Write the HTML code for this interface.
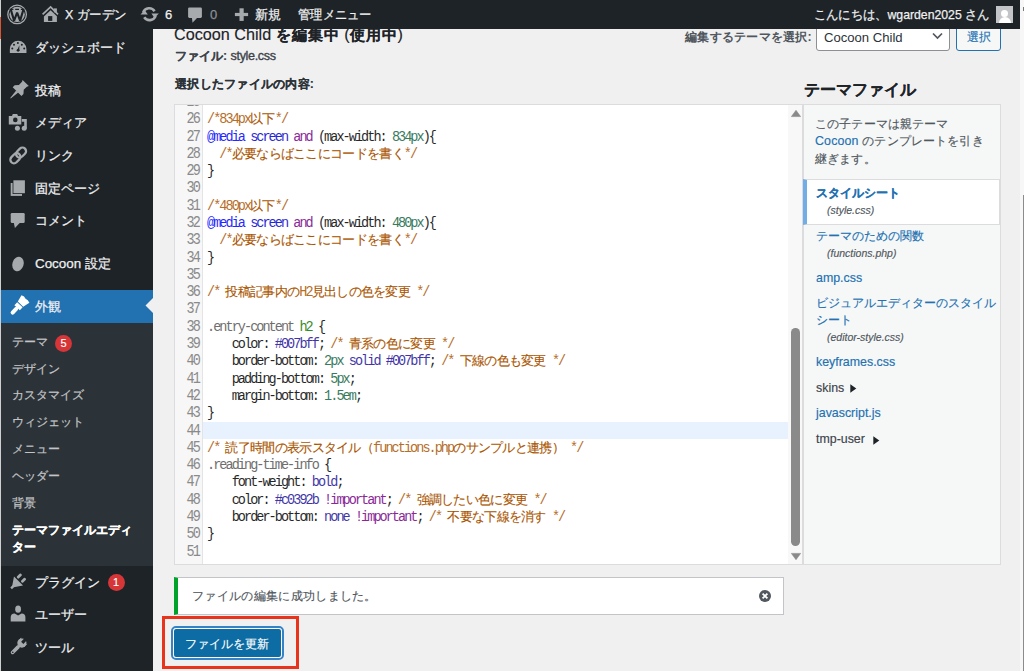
<!DOCTYPE html>
<html><head><meta charset="utf-8">
<style>
*{box-sizing:border-box}
html,body{margin:0;padding:0}
body{-webkit-text-stroke:0.15px currentColor;}
[style*="bold"]{-webkit-text-stroke:0.12px currentColor;}
body{width:1024px;height:671px;overflow:hidden;position:relative;background:#f0f0f1;font-family:"Liberation Sans",sans-serif;color:#3c434a}
.a{position:absolute;white-space:nowrap}
svg{position:absolute;overflow:visible}
#bar{position:absolute;left:0;top:0;width:1020px;height:29px;background:#1d2327;z-index:10}
#side{position:absolute;left:0;top:29px;width:153px;height:642px;background:#1d2327;z-index:1}
#edge{z-index:20;position:absolute;left:0;top:0;width:1px;height:671px;background:#cfcfcf}
#edge2{z-index:21;position:absolute;left:0;top:17px;width:1px;height:22px;background:#d9542f}
#rstrip{z-index:20;position:absolute;left:1020px;top:0;width:4px;height:671px;background:#f7f7f7}
.bt{-webkit-text-stroke:0.25px currentColor;color:#f0f0f1;font-size:13px;line-height:16px;top:7px;z-index:11}
.mi{z-index:2;-webkit-text-stroke:0.25px #f0f0f1;color:#f0f0f1;font-size:13.4px;line-height:18px;left:35px}
.sub{z-index:2;-webkit-text-stroke:0.2px currentColor;color:#c3c4c7;font-size:12.4px;line-height:16px;left:12px}
.badge{z-index:2;position:absolute;width:17px;height:17px;border-radius:50%;background:#d63638;color:#fff;font-size:11px;line-height:17px;text-align:center}
.h{color:#1d2327}
#ed{position:absolute;left:174px;top:104px;width:629px;height:461px;background:#fff;border:1px solid #dcdcde;overflow:hidden}
#gut{position:absolute;left:0;top:0;width:28px;height:100%;background:#f7f7f7;border-right:1px solid #e4e4e4}
.ln{-webkit-text-stroke:0;position:absolute;left:0;width:23.8px;text-align:right;color:#8a8a8a;font-family:"Liberation Mono",monospace;font-size:13.5px;letter-spacing:-1.94px;line-height:17.29px;transform:scaleY(1.22);transform-origin:0 12.25px}
.cl{position:absolute;left:32px;color:#000;font-family:"Liberation Mono",monospace;font-size:13.5px;letter-spacing:-1.94px;line-height:17.29px;white-space:pre}
.cl .s{-webkit-text-stroke:0;opacity:0.85;display:inline-block;transform:scaleY(1.1);transform-origin:0 12.25px}
.cl .j{font-size:13px;letter-spacing:-0.7px;-webkit-text-stroke:0.12px currentColor}
.cm{color:#a50}.df{color:#00f}.at{color:#00c}.kw{color:#708}.nu{color:#164}.qu{color:#555}.tg{color:#170}.am{color:#219}
#files{position:absolute;left:803px;top:104px;width:198px;height:461px;background:#f6f7f7;border:1px solid #dcdcde}
.fl{position:absolute;left:12px;color:#2271b1;font-size:12.4px;line-height:17px;white-space:nowrap}
.fi{position:absolute;left:23px;color:#50575e;font-size:10.5px;font-style:italic;white-space:nowrap;line-height:14px}
</style></head><body>
<div id="bar"></div>
<div id="side"><div style="position:absolute;left:0;top:261px;width:153px;height:33px;background:#2271b1"></div><div style="position:absolute;left:0;top:294px;width:153px;height:243px;background:#2c3338"></div></div>
<div class="a mi" style="top:38.7px">ダッシュボード</div>
<div class="a mi" style="top:82.0px">投稿</div>
<div class="a mi" style="top:114.1px">メディア</div>
<div class="a mi" style="top:147.2px">リンク</div>
<div class="a mi" style="top:179.9px">固定ページ</div>
<div class="a mi" style="top:211.6px">コメント</div>
<div class="a mi" style="top:255.1px">Cocoon 設定</div>
<div class="a mi" style="top:298.2px">外観</div>
<div class="a mi" style="top:574.1px">プラグイン</div>
<div class="a mi" style="top:606.3px">ユーザー</div>
<div class="a mi" style="top:638.7px">ツール</div>
<div class="a sub" style="top:334.0px">テーマ</div>
<div class="a sub" style="top:361.2px">デザイン</div>
<div class="a sub" style="top:387.3px">カスタマイズ</div>
<div class="a sub" style="top:414.0px">ウィジェット</div>
<div class="a sub" style="top:441.0px">メニュー</div>
<div class="a sub" style="top:468.0px">ヘッダー</div>
<div class="a sub" style="top:494.5px">背景</div>
<div class="a sub" style="top:522px;color:#fff;font-weight:bold">テーマファイルエディ</div>
<div class="a sub" style="top:539px;color:#fff;font-weight:bold">ター</div>
<div class="badge" style="left:55px;top:334.5px">5</div>
<div class="badge" style="left:107.5px;top:574px">1</div>
<svg style="left:145px;top:298px;z-index:2" width="8" height="16"><path d="M8 0 L0.5 7.5 L8 15 Z" fill="#f0f0f1"/></svg>
<svg style="left:3px;top:0px;z-index:11" width="28" height="28" viewBox="0 0 28 28"><circle cx="14.1" cy="14.4" r="9.3" fill="none" stroke="#a7aaad" stroke-width="1.25"/><circle cx="14.1" cy="14.4" r="7.7" fill="#a7aaad"/><path d="M7.8 9.6 L11.1 20.6 L14.1 12.6 L17.1 20.6 L20.4 9.6" fill="none" stroke="#1d2327" stroke-width="2.1" stroke-linejoin="bevel"/><path d="M6.6 9.4 H10.4 M12.2 9.4 H16 M17.9 9.4 H21.4" stroke="#1d2327" stroke-width="1.1"/></svg>
<svg style="left:36px;top:0px;z-index:11" width="28" height="28" viewBox="0 0 28 28"><path d="M6.6 14.4 L14.6 6.9 L22 14.4" fill="none" stroke="#a7aaad" stroke-width="1.7"/><rect x="17.9" y="8.4" width="3" height="4" fill="#a7aaad"/><path d="M7.9 16.6 L14.6 10.3 L20.9 16.3 V21.9 H7.9 Z" fill="#a7aaad"/><rect x="12.1" y="16.1" width="4.2" height="4.8" fill="#1d2327"/></svg>
<svg style="left:134px;top:0px;z-index:11" width="28" height="28" viewBox="0 0 28 28"><path d="M9.2 12.5 A6.4 6.4 0 0 1 20.6 11.2" fill="none" stroke="#a7aaad" stroke-width="2.6"/><path d="M21.6 15.8 A6.4 6.4 0 0 1 10.2 17.3" fill="none" stroke="#a7aaad" stroke-width="2.6"/><path d="M6.5 14.5 L10.6 10 L13.8 14.5 Z" fill="#a7aaad"/><path d="M24.8 13.4 L20.6 18 L17.4 13.4 Z" fill="#a7aaad"/></svg>
<svg style="left:180px;top:0px;z-index:11" width="28" height="28" viewBox="0 0 28 28"><rect x="8.1" y="7.5" width="13.8" height="10.4" rx="1.3" fill="#a7aaad"/><path d="M11.9 17.5 L12.5 22.7 L17.5 17.5 Z" fill="#a7aaad"/></svg>
<svg style="left:227px;top:0px;z-index:11" width="28" height="28" viewBox="0 0 28 28"><rect x="7.9" y="12.9" width="13.2" height="3.2" fill="#a7aaad"/><rect x="12.5" y="8.3" width="4.2" height="12.6" fill="#a7aaad"/></svg>
<div style="position:absolute;left:996px;top:6px;width:17px;height:17px;background:#c3c4c7;overflow:hidden;z-index:11"><div style="position:absolute;left:5.2px;top:3.5px;width:6.6px;height:7px;border-radius:50%;background:#fff"></div><div style="position:absolute;left:2.5px;top:10.5px;width:12px;height:9px;border-radius:6px 6px 0 0;background:#fff"></div></div>
<svg style="left:4px;top:36px;z-index:2" width="28" height="28" viewBox="0 0 28 28"><path d="M5.85 17.1 V13.1 A8.3 8.3 0 0 1 22.45 13.1 V17.1 Z" fill="#a7aaad"/><circle cx="8.3" cy="12.4" r="1" fill="#1d2327"/><circle cx="10" cy="8.8" r="1" fill="#1d2327"/><circle cx="13.9" cy="6.9" r="1" fill="#1d2327"/><circle cx="17.8" cy="8.8" r="1" fill="#1d2327"/><circle cx="20.2" cy="12.4" r="1" fill="#1d2327"/><path d="M13 14.6 L15.4 9.2 L15.3 14.8 Z" fill="#1d2327"/><circle cx="14.1" cy="14.3" r="1.4" fill="#1d2327"/></svg>
<svg style="left:4px;top:76px;z-index:2" width="28" height="28" viewBox="0 0 28 28"><g transform="translate(14.5 14.2) rotate(45)"><path d="M-4.4 -10.2 H4.4 L3.4 -8.4 V-4 L6.2 -0.8 V2 H-6.2 V-0.8 L-3.4 -4 V-8.4 Z" fill="#a7aaad"/><path d="M-1.5 1.8 H1.5 L0.3 11.4 H-0.3 Z" fill="#a7aaad"/></g></svg>
<svg style="left:4px;top:108px;z-index:2" width="28" height="28" viewBox="0 0 28 28"><path d="M4.8 8.1 H8 L8.8 6 H13.2 L14 8.1 H17.3 V16.5 H4.8 Z" fill="#a7aaad"/><circle cx="11.3" cy="11.9" r="2.3" fill="#1d2327"/><path d="M17.8 11 H22.8 V20.4 H20.2 V13.8 H17.8 Z" fill="#a7aaad"/><circle cx="13.4" cy="20.3" r="2.5" fill="#a7aaad"/><circle cx="20.2" cy="20.3" r="2.5" fill="#a7aaad"/></svg>
<svg style="left:4px;top:141px;z-index:2" width="28" height="28" viewBox="0 0 28 28"><g transform="translate(14.2 14.4) rotate(-45)" fill="none" stroke="#a7aaad" stroke-width="2.3"><rect x="-1.6" y="-3.6" width="11.2" height="7.2" rx="3.6"/><rect x="-9.6" y="-3.6" width="11.2" height="7.2" rx="3.6"/></g></svg>
<svg style="left:4px;top:174px;z-index:2" width="28" height="28" viewBox="0 0 28 28"><rect x="6.7" y="9" width="11.3" height="12.9" fill="#a7aaad"/><rect x="8.6" y="5.5" width="13.1" height="14.5" fill="#1d2327"/><rect x="9.4" y="6.3" width="11.5" height="12.9" fill="#a7aaad"/></svg>
<svg style="left:4px;top:206px;z-index:2" width="28" height="28" viewBox="0 0 28 28"><rect x="6.7" y="6.9" width="14" height="10.2" rx="1.4" fill="#a7aaad"/><path d="M9.8 16.8 L10.9 21.9 L15.9 16.8 Z" fill="#a7aaad"/></svg>
<svg style="left:4px;top:250px;z-index:2" width="28" height="28" viewBox="0 0 28 28"><ellipse cx="14" cy="14" rx="5.6" ry="7.3" transform="rotate(18 14 14)" fill="#a7aaad"/></svg>
<svg style="left:4px;top:292px;z-index:2" width="28" height="28" viewBox="0 0 28 28"><g transform="translate(14.2 14.6) rotate(43)"><path d="M-3.7 -3.4 L-5.4 -10.6 Q-2.5 -12 0 -10.8 Q2.6 -11.8 5.6 -10.4 L3.7 -3.4 Z" fill="#fff"/><rect x="-3.7" y="-2.5" width="7.4" height="4.1" fill="#fff"/><rect x="-2" y="1" width="4" height="9.2" rx="2" fill="#fff"/></g></svg>
<svg style="left:4px;top:568px;z-index:2" width="28" height="28" viewBox="0 0 28 28"><g transform="translate(14.3 13.25) rotate(45)"><path d="M-6.4 -0.3 H6.4 L1 7.6 H-1 Z" fill="#a7aaad"/><rect x="-1.2" y="6.6" width="2.4" height="3.6" fill="#a7aaad"/><rect x="-4.3" y="-7.2" width="2.7" height="5.6" rx="1" fill="#a7aaad"/><rect x="1.6" y="-7.2" width="2.7" height="5.6" rx="1" fill="#a7aaad"/></g></svg>
<svg style="left:4px;top:600px;z-index:2" width="28" height="28" viewBox="0 0 28 28"><ellipse cx="14.1" cy="9.2" rx="2.9" ry="3.6" fill="#a7aaad"/><path d="M6.7 21.6 V17.2 Q6.7 13.9 10.6 13.6 L14.1 15.4 L17.6 13.6 Q21.4 13.9 21.4 17.2 V21.6 Z" fill="#a7aaad"/></svg>
<svg style="left:4px;top:633px;z-index:2" width="28" height="28" viewBox="0 0 28 28"><g transform="translate(14 14) rotate(45)"><rect x="-1.8" y="-2" width="3.6" height="11.5" rx="1.8" fill="#a7aaad"/><path d="M-4.4 -9 A5 5 0 0 0 4.4 -9 V-6 A4.6 4.6 0 0 1 -4.4 -6 Z" fill="#a7aaad"/><circle cx="0" cy="-5.5" r="4.6" fill="#a7aaad"/><rect x="-1.6" y="-11" width="3.2" height="5" fill="#1d2327"/><circle cx="0" cy="7.4" r="0.8" fill="#1d2327"/></g></svg>
<svg style="left:932px;top:32px;z-index:3" width="11" height="8" viewBox="0 0 11 8"><path d="M1 1.5 L5.5 6 L10 1.5" fill="none" stroke="#50575e" stroke-width="1.7"/></svg>
<svg style="left:758.8px;top:589.8px;z-index:3" width="12" height="12" viewBox="0 0 12 12"><circle cx="6" cy="6" r="6" fill="#50575e"/><path d="M3.6 3.6 L8.4 8.4 M8.4 3.6 L3.6 8.4" stroke="#fff" stroke-width="1.8"/></svg>
<div class="a bt" style="left:65px;transform:scaleX(0.96);transform-origin:0 0">X ガーデン</div>
<div class="a bt" style="left:165px">6</div>
<div class="a bt" style="left:210px;color:#8c8f94">0</div>
<div class="a bt" style="left:255px">新規</div>
<div class="a bt" style="left:298px;transform:scaleX(0.945);transform-origin:0 0">管理メニュー</div>
<div class="a bt" style="left:814px;font-size:13px;transform:scaleX(0.942);transform-origin:0 0">こんにちは、wgarden2025 さん</div>
<div class="a h" style="left:174px;top:24px;font-size:16.2px;line-height:20px">Cocoon Child <span style="font-size:15px;font-weight:bold;letter-spacing:1px">を編集中</span> (<span style="font-size:15px;font-weight:bold;letter-spacing:1px">使用中</span>)</div>
<div class="a h" style="left:175px;top:48px;font-size:12.4px;line-height:16px;font-weight:bold;color:#3c434a">ファイル: <span style="font-weight:normal;-webkit-text-stroke:0.35px currentColor;font-size:12.6px;letter-spacing:-0.35px">style.css</span></div>
<div class="a h" style="left:175px;top:76px;font-size:12.4px;line-height:16px;font-weight:bold;color:#2c3338;letter-spacing:0.25px">選択したファイルの内容:</div>
<div class="a h" style="left:685px;top:29px;font-size:12.4px;line-height:16px;font-weight:bold;color:#50575e;-webkit-text-stroke:0;letter-spacing:0.25px">編集するテーマを選択:</div>
<div style="position:absolute;left:816px;top:22px;width:134px;height:29px;background:#fff;border:1px solid #8c8f94;border-radius:3px"></div>
<div class="a" style="left:824px;top:29.5px;font-size:13.1px;line-height:16px;color:#2c3338;-webkit-text-stroke:0">Cocoon Child</div>
<div style="position:absolute;left:956px;top:22px;width:45px;height:29px;background:#f6f7f7;border:1px solid #2271b1;border-radius:3px"></div>
<div class="a" style="left:967px;top:29px;font-size:12.4px;line-height:16px;color:#2271b1">選択</div>
<div class="a h" style="left:804px;top:78.5px;font-size:16.3px;line-height:20px;font-weight:bold">テーマファイル</div>
<div id="ed"><div id="gut"></div><div class="ln" style="top:-10.99px">25</div><div class="cl" style="top:-10.99px"></div><div class="ln" style="top:6.30px">26</div><div class="cl" style="top:6.30px"><span class="cm"><span class="s">/*834px</span><span class="j">以下</span><span class="s">*/</span></span></div><div class="ln" style="top:23.59px">27</div><div class="cl" style="top:23.59px"><span class="df"><span class="s">@media</span></span> <span class="at"><span class="s">screen</span></span> <span class="kw"><span class="s">and</span></span><span class="s"> (max-width: </span><span class="nu"><span class="s">834px</span></span><span class="s">){</span></div><div class="ln" style="top:40.88px">28</div><div class="cl" style="top:40.88px">  <span class="cm"><span class="s">/*</span><span class="j">必要ならばここにコードを書く</span><span class="s">*/</span></span></div><div class="ln" style="top:58.17px">29</div><div class="cl" style="top:58.17px"><span class="s">}</span></div><div class="ln" style="top:75.46px">30</div><div class="cl" style="top:75.46px"></div><div class="ln" style="top:92.75px">31</div><div class="cl" style="top:92.75px"><span class="cm"><span class="s">/*480px</span><span class="j">以下</span><span class="s">*/</span></span></div><div class="ln" style="top:110.04px">32</div><div class="cl" style="top:110.04px"><span class="df"><span class="s">@media</span></span> <span class="at"><span class="s">screen</span></span> <span class="kw"><span class="s">and</span></span><span class="s"> (max-width: </span><span class="nu"><span class="s">480px</span></span><span class="s">){</span></div><div class="ln" style="top:127.33px">33</div><div class="cl" style="top:127.33px">  <span class="cm"><span class="s">/*</span><span class="j">必要ならばここにコードを書く</span><span class="s">*/</span></span></div><div class="ln" style="top:144.62px">34</div><div class="cl" style="top:144.62px"><span class="s">}</span></div><div class="ln" style="top:161.91px">35</div><div class="cl" style="top:161.91px"></div><div class="ln" style="top:179.20px">36</div><div class="cl" style="top:179.20px"><span class="cm"><span class="s">/* </span><span class="j">投稿記事内の</span><span class="s">H2</span><span class="j">見出しの色を変更</span><span class="s"> */</span></span></div><div class="ln" style="top:196.49px">37</div><div class="cl" style="top:196.49px"></div><div class="ln" style="top:213.78px">38</div><div class="cl" style="top:213.78px"><span class="qu"><span class="s">.entry-content</span></span> <span class="tg"><span class="s">h2</span></span><span class="s"> {</span></div><div class="ln" style="top:231.07px">39</div><div class="cl" style="top:231.07px"><span class="s">    color: </span><span class="am"><span class="s">#007bff</span></span><span class="s">; </span><span class="cm"><span class="s">/* </span><span class="j">青系の色に変更</span><span class="s"> */</span></span></div><div class="ln" style="top:248.36px">40</div><div class="cl" style="top:248.36px"><span class="s">    border-bottom: </span><span class="nu"><span class="s">2px</span></span> <span class="am"><span class="s">solid</span></span> <span class="am"><span class="s">#007bff</span></span><span class="s">; </span><span class="cm"><span class="s">/* </span><span class="j">下線の色も変更</span><span class="s"> */</span></span></div><div class="ln" style="top:265.65px">41</div><div class="cl" style="top:265.65px"><span class="s">    padding-bottom: </span><span class="nu"><span class="s">5px</span></span><span class="s">;</span></div><div class="ln" style="top:282.94px">42</div><div class="cl" style="top:282.94px"><span class="s">    margin-bottom: </span><span class="nu"><span class="s">1.5em</span></span><span class="s">;</span></div><div class="ln" style="top:300.23px">43</div><div class="cl" style="top:300.23px"><span class="s">}</span></div><div style="position:absolute;left:28px;top:316.62px;width:585px;height:17.29px;background:#e8f2fe"></div><div class="ln" style="top:317.52px">44</div><div class="cl" style="top:317.52px"></div><div class="ln" style="top:334.81px">45</div><div class="cl" style="top:334.81px"><span class="cm"><span class="s">/* </span><span class="j">読了時間の表示スタイル（</span><span class="s">functions.php</span><span class="j">のサンプルと連携）</span><span class="s"> */</span></span></div><div class="ln" style="top:352.10px">46</div><div class="cl" style="top:352.10px"><span class="qu"><span class="s">.reading-time-info</span></span><span class="s"> {</span></div><div class="ln" style="top:369.39px">47</div><div class="cl" style="top:369.39px"><span class="s">    font-weight: </span><span class="am"><span class="s">bold</span></span><span class="s">;</span></div><div class="ln" style="top:386.68px">48</div><div class="cl" style="top:386.68px"><span class="s">    color: </span><span class="am"><span class="s">#c0392b</span></span> <span class="kw"><span class="s">!important</span></span><span class="s">; </span><span class="cm"><span class="s">/* </span><span class="j">強調したい色に変更</span><span class="s"> */</span></span></div><div class="ln" style="top:403.97px">49</div><div class="cl" style="top:403.97px"><span class="s">    border-bottom: </span><span class="am"><span class="s">none</span></span> <span class="kw"><span class="s">!important</span></span><span class="s">; </span><span class="cm"><span class="s">/* </span><span class="j">不要な下線を消す</span><span class="s"> */</span></span></div><div class="ln" style="top:421.26px">50</div><div class="cl" style="top:421.26px"><span class="s">}</span></div><div class="ln" style="top:438.55px">51</div><div class="cl" style="top:438.55px"></div><div style="position:absolute;left:613px;top:0;width:14px;height:100%;background:#f8f8f8"></div><svg style="left:616px;top:5px" width="10" height="7" viewBox="0 0 10 7"><path d="M5 0.3 L9.6 6.6 H0.4 Z" fill="#8a8a8a" stroke="#8a8a8a" stroke-width="0.6" stroke-linejoin="round"/></svg><div style="position:absolute;left:616px;top:223px;width:8.8px;height:218px;border-radius:4.4px;background:#8a8a8a"></div><svg style="left:616px;top:448px" width="10" height="7" viewBox="0 0 10 7"><path d="M5 6.7 L9.6 0.4 H0.4 Z" fill="#8a8a8a" stroke="#8a8a8a" stroke-width="0.6" stroke-linejoin="round"/></svg></div>
<div id="files"><div class="a" style="left:11px;top:11px;font-size:12.4px;line-height:17.3px;color:#50575e;white-space:normal;width:190px;letter-spacing:0.15px">この子テーマは親テーマ<br><span style="color:#2271b1">Cocoon</span> のテンプレートを引き<br>継ぎます。</div><div style="position:absolute;left:-1px;top:74px;width:197px;height:46px;background:#fff;border-top:1px solid #dcdcde;border-bottom:1px solid #dcdcde;border-right:1px solid #dcdcde;border-left:4px solid #72aee6"></div><div class="fl" style="top:80px;font-weight:bold">スタイルシート</div><div class="fi" style="top:98px">(style.css)</div><div class="fl" style="top:123px">テーマのための関数</div><div class="fi" style="top:141px">(functions.php)</div><div class="fl" style="top:165px">amp.css</div><div class="fl" style="top:190px">ビジュアルエディターのスタイル</div><div class="fl" style="top:207px">シート</div><div class="fi" style="top:225px">(editor-style.css)</div><div class="fl" style="top:249px">keyframes.css</div><div class="fl" style="top:275px;color:#3c434a">skins</div><svg style="left:45.5px;top:279px" width="7" height="9" viewBox="0 0 7 9"><path d="M0.3 0.3 L6.3 4.5 L0.3 8.7 Z" fill="#1d2327"/></svg><div class="fl" style="top:300px">javascript.js</div><div class="fl" style="top:326px;color:#3c434a">tmp-user</div><svg style="left:69px;top:330.5px" width="7" height="9" viewBox="0 0 7 9"><path d="M0.3 0.3 L6.3 4.5 L0.3 8.7 Z" fill="#1d2327"/></svg></div>
<div style="position:absolute;left:174px;top:577px;width:610px;height:38px;background:#fff;border:1px solid #c3c4c7;border-left:4px solid #00a32a"></div>
<div class="a" style="left:192px;top:588px;font-size:12.4px;line-height:16px;color:#50575e;letter-spacing:0.32px">ファイルの編集に成功しました。</div>
<div style="position:absolute;left:171px;top:626px;width:113px;height:34px;border-radius:5px;border:2px solid #3582c4;"><div style="position:absolute;left:0;top:0;right:0;bottom:0;border:1px solid #fff;border-radius:3px;background:#0c6ca3"></div></div>
<div class="a" style="left:185px;top:636px;font-size:12.4px;line-height:16px;color:#fff">ファイルを更新</div>
<div style="position:absolute;left:161.5px;top:616px;width:137px;height:53px;border:3px solid #e8341c"></div>
<div id="edge"></div><div id="edge2"></div><div id="rstrip"></div><div style="position:absolute;z-index:21;left:1023px;top:7px;width:1px;height:4px;background:#7a7a7a"></div><div style="position:absolute;z-index:21;left:1023px;top:195px;width:1px;height:476px;background:#8c8c8c"></div>
</body></html>
